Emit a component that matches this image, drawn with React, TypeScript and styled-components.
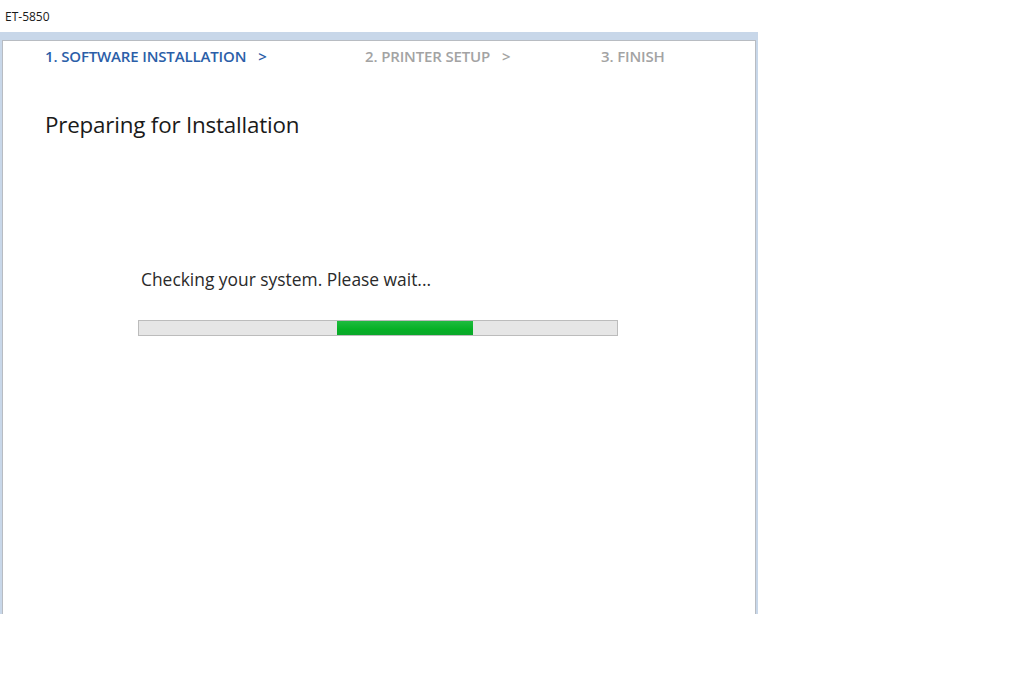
import React from "react";
import styled, { createGlobalStyle } from "styled-components";

const Global = createGlobalStyle`
  html, body { margin: 0; padding: 0; background: #ffffff; }
  body { font-family: "Open Sans", "Noto Sans", Arial, sans-serif; }
`;

const Page = styled.div`
  width: 1024px;
  height: 683px;
  background: #fff;
  display: flex;
  flex-direction: column;
`;

const AppTitle = styled.div`
  height: 32px;
  padding-left: 5px;
  display: flex;
  align-items: center;
  font-size: 12px;
  color: #1a1a1a;
`;

const Frame = styled.div`
  width: 758px;
  height: 582px;
  box-sizing: border-box;
  background: #c8d7e9;
  padding: 8px 2px 0 2px;
  display: flex;
`;

const Client = styled.div`
  flex: 1;
  background: #fff;
  border-left: 1px solid #b8bcc2;
  border-right: 1px solid #b8bcc2;
  border-top: 1px solid #b8bcc2;
  display: flex;
  flex-direction: column;
`;

const Steps = styled.div`
  display: grid;
  grid-template-columns: 320px 236px auto;
  padding-left: 42px;
  height: 30px;
  align-items: center;
`;

const Step = styled.div<{ $active?: boolean }>`
  display: flex;
  align-items: center;
  font-size: 15px;
  font-weight: 600;
  letter-spacing: -0.15px;
  color: ${(p) => (p.$active ? "#2b5ea8" : "#a3a3a3")};
`;

const Chevron = styled.span<{ $gap: number }>`
  margin-left: ${(p) => p.$gap}px;
  font-weight: 600;
`;

const Heading = styled.h1`
  margin: 39px 0 0 42px;
  font-size: 22.4px;
  font-weight: 400;
  color: #1a1a1a;
  letter-spacing: -0.2px;
  line-height: 30px;
`;

const Body = styled.div`
  margin: 127px 0 0 135px;
  display: flex;
  flex-direction: column;
`;

const Message = styled.div`
  font-size: 17.4px;
  color: #2a2a2a;
  letter-spacing: 0px;
  line-height: 24px;
  padding-left: 3px;
`;

const Track = styled.div`
  margin-top: 29px;
  width: 480px;
  height: 16px;
  box-sizing: border-box;
  border: 1px solid #bcbcbc;
  background: #e6e6e6;
  display: flex;
`;

const Fill = styled.div`
  height: 100%;
  background: linear-gradient(#1fbc3f, #06b025 60%, #0aa82a);
`;

export default function App() {
  return (
    <>
      <Global />
      <Page>
        <AppTitle>ET-5850</AppTitle>
        <Frame>
          <Client>
            <Steps>
              <Step $active>
                1. SOFTWARE INSTALLATION<Chevron $gap={12}>&gt;</Chevron>
              </Step>
              <Step>
                2. PRINTER SETUP<Chevron $gap={12}>&gt;</Chevron>
              </Step>
              <Step>3. FINISH</Step>
            </Steps>
            <Heading>Preparing for Installation</Heading>
            <Body>
              <Message>Checking your system. Please wait...</Message>
              <Track>
                <div style={{ width: 198 }} />
                <Fill style={{ width: 136 }} />
              </Track>
            </Body>
          </Client>
        </Frame>
      </Page>
    </>
  );
}
